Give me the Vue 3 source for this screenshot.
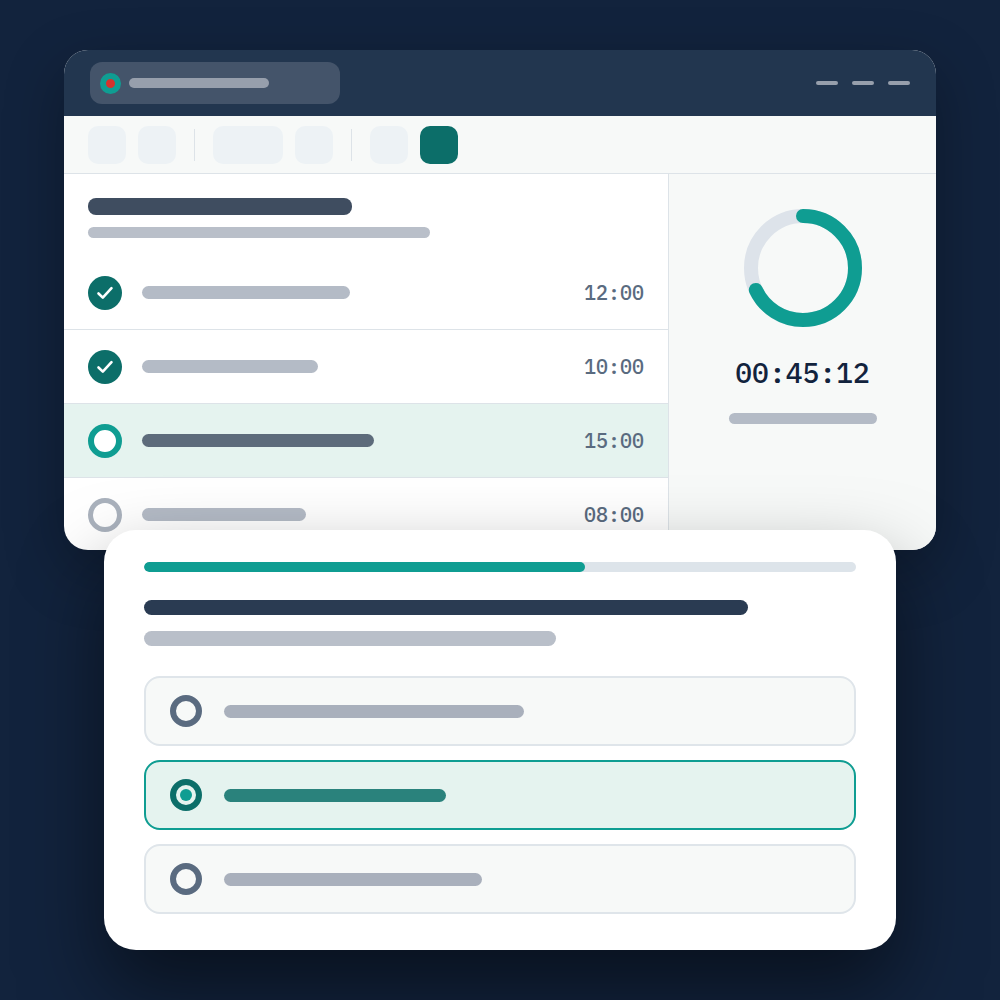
<template>
  <div class="stage">
    <div class="window">
      <div class="titlebar">
        <div class="tab">
          <span class="tab-dot"></span>
          <span class="tab-line"></span>
        </div>
        <div class="win-controls">
          <span v-for="n in 3" :key="n" class="win-dash"></span>
        </div>
      </div>

      <div class="toolbar">
        <template v-for="(tool, i) in tools" :key="i">
          <span v-if="tool === 'sep'" class="tool-sep"></span>
          <span v-else class="tool" :class="tool"></span>
        </template>
      </div>

      <div class="body">
        <div class="main">
          <div class="heading">
            <div class="heading-title"></div>
            <div class="heading-sub"></div>
          </div>
          <div
            v-for="row in rows"
            :key="row.time"
            class="row"
            :class="{ current: row.state === 'current' }"
          >
            <span v-if="row.state === 'done'" class="status done">
              <svg viewBox="0 0 34 34" width="34" height="34">
                <path d="M10.5 17.5 L14.8 21.6 L23.5 12.2" fill="none" stroke="#fff" stroke-width="2.6" stroke-linecap="round" stroke-linejoin="round" />
              </svg>
            </span>
            <span v-else class="status" :class="row.state"></span>
            <span class="row-line" :style="{ width: row.width + 'px' }"></span>
            <span class="row-time">{{ row.time }}</span>
          </div>
        </div>

        <div class="side">
          <svg class="ring" viewBox="0 0 118 118" width="118" height="118">
            <circle cx="59" cy="59" r="52" fill="none" stroke="#dde3ea" stroke-width="14" />
            <circle
              cx="59" cy="59" r="52" fill="none" stroke="#0f9d92" stroke-width="14"
              stroke-linecap="round" stroke-dasharray="222 327" transform="rotate(-90 59 59)"
            />
          </svg>
          <div class="timer">00:45:12</div>
          <div class="side-line"></div>
        </div>
      </div>
    </div>

    <div class="card">
      <div class="progress"><div class="progress-fill"></div></div>
      <div class="q-title"></div>
      <div class="q-sub"></div>
      <div class="options">
        <div
          v-for="opt in options"
          :key="opt.width"
          class="option"
          :class="{ selected: opt.selected }"
        >
          <span class="radio"><span v-if="opt.selected" class="radio-dot"></span></span>
          <span class="option-line" :style="{ width: opt.width + 'px' }"></span>
        </div>
      </div>
    </div>
  </div>
</template>

<script setup>
const tools = ['sq', 'sq', 'sep', 'wide', 'sq', 'sep', 'sq', 'active']

const rows = [
  { state: 'done', width: 208, time: '12:00' },
  { state: 'done', width: 176, time: '10:00' },
  { state: 'current', width: 232, time: '15:00' },
  { state: 'todo', width: 164, time: '08:00' }
]

const options = [
  { width: 300, selected: false },
  { width: 222, selected: true },
  { width: 258, selected: false }
]
</script>

<style scoped>
.stage { width: 1000px; height: 1000px; padding-top: 50px; box-sizing: border-box; overflow: hidden; }

.window {
  width: 872px;
  height: 500px;
  margin: 0 64px;
  background: #fff;
  border-radius: 24px;
  overflow: hidden;
  display: flex;
  flex-direction: column;
  box-shadow: 0 20px 60px rgba(0, 0, 0, 0.3);
}
.titlebar {
  height: 66px;
  flex: none;
  background: #22364f;
  display: flex;
  align-items: center;
  justify-content: space-between;
  padding: 0 26px;
}
.tab {
  width: 250px;
  height: 42px;
  background: #44546a;
  border-radius: 12px;
  display: flex;
  align-items: center;
  padding-left: 10px;
  box-sizing: border-box;
  gap: 8px;
}
.tab-dot { width: 21px; height: 21px; border-radius: 50%; border: 6px solid #0f9d92; background: #d6322c; box-sizing: border-box; }
.tab-line { width: 140px; height: 10px; border-radius: 5px; background: #979fac; }
.win-controls { display: flex; gap: 14px; }
.win-dash { width: 22px; height: 4px; border-radius: 2px; background: #979fac; }

.toolbar {
  height: 58px;
  flex: none;
  box-sizing: border-box;
  background: #f7f9f8;
  border-bottom: 1px solid #dde3e8;
  display: flex;
  align-items: center;
  padding: 0 24px;
  gap: 12px;
}
.tool { width: 38px; height: 38px; border-radius: 10px; background: #edf2f5; }
.tool.wide { width: 70px; }
.tool.active { background: #0c6e69; }
.tool-sep { width: 1px; height: 32px; background: #dde3e8; margin: 0 6px; }

.body { flex: 1; display: flex; min-height: 0; }
.main { width: 604px; flex: none; }
.heading { padding: 24px 24px 18px; }
.heading-title { width: 264px; height: 17px; border-radius: 8px; background: #3f4d60; }
.heading-sub { width: 342px; height: 11px; border-radius: 6px; background: #b9bfc9; margin-top: 12px; }

.row {
  height: 74px;
  box-sizing: border-box;
  border-bottom: 1px solid #dde3e8;
  display: flex;
  align-items: center;
  padding: 0 24px;
  gap: 20px;
}
.row.current { background: #e5f3ef; }
.status { width: 34px; height: 34px; flex: none; border-radius: 50%; box-sizing: border-box; background: #fff; }
.status.done { background: #0c6e69; }
.status.done svg { display: block; }
.status.current { border: 6px solid #0f9d92; }
.status.todo { border: 5px solid #aab2bd; }
.row-line { height: 13px; border-radius: 7px; background: #b4bbc6; }
.row.current .row-line { background: #5d6b7b; }
.row-time {
  margin-left: auto;
  font-family: "IBM Plex Mono", "Liberation Mono", monospace;
  font-size: 20px;
  font-weight: 500;
  color: #5a6b80;
}

.side {
  flex: 1;
  background: #f7f9f8;
  border-left: 1px solid #dde3e8;
  display: flex;
  flex-direction: column;
  align-items: center;
  padding-top: 35px;
}
.ring { display: block; }
.timer {
  margin-top: 28px;
  font-family: "IBM Plex Mono", "Liberation Mono", monospace;
  font-size: 28px;
  line-height: 36px;
  font-weight: 500;
  color: #12233d;
}
.side-line { width: 148px; height: 11px; border-radius: 6px; background: #b4bbc6; margin-top: 22px; }

.card {
  position: relative;
  width: 792px;
  height: 420px;
  box-sizing: border-box;
  margin: -20px 104px 0;
  padding: 32px 40px;
  background: #fff;
  border-radius: 32px;
  box-shadow: 0 40px 80px rgba(0, 0, 0, 0.5);
}
.progress { height: 10px; border-radius: 5px; background: #dde4ea; overflow: hidden; }
.progress-fill { width: 62%; height: 100%; border-radius: 5px; background: #0f9d92; }
.q-title { width: 604px; height: 15px; border-radius: 8px; background: #2a3b52; margin-top: 28px; }
.q-sub { width: 412px; height: 15px; border-radius: 8px; background: #b9bfc9; margin-top: 16px; }

.options { display: flex; flex-direction: column; gap: 14px; margin-top: 30px; }
.option {
  height: 70px;
  box-sizing: border-box;
  border: 2px solid #dfe5ea;
  border-radius: 16px;
  background: #f7f9f8;
  display: flex;
  align-items: center;
  padding: 0 24px;
  gap: 22px;
}
.option.selected { border-color: #0f9d92; background: #e5f3ef; }
.radio {
  width: 32px;
  height: 32px;
  flex: none;
  box-sizing: border-box;
  border: 6px solid #5a6b80;
  border-radius: 50%;
  display: flex;
  align-items: center;
  justify-content: center;
}
.option.selected .radio { border-color: #0c6e69; }
.radio-dot { width: 12px; height: 12px; border-radius: 50%; background: #0f9d92; }
.option-line { height: 13px; border-radius: 7px; background: #a9b0bc; }
.option.selected .option-line { background: #2a827c; }
</style>

<style>
body { background: #12233d; }
</style>
